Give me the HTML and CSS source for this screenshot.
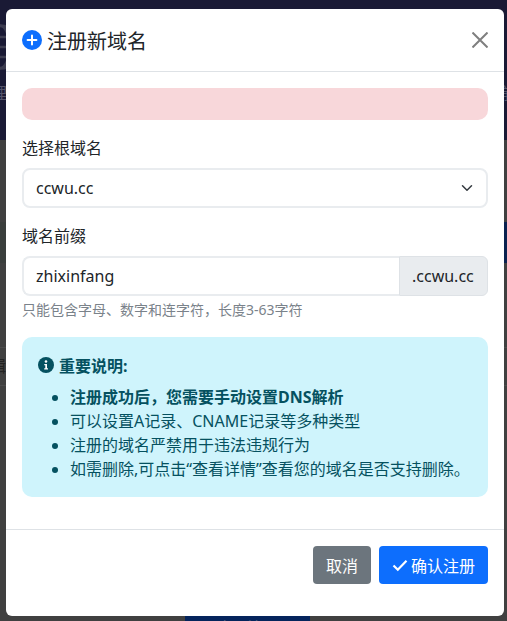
FILE: index.html
```html
<!DOCTYPE html>
<html lang="zh-CN">
    <head>
        <meta charset="utf-8">
        <meta name="viewport" content="width=device-width, initial-scale=1.0">
        <title>注册新域名</title>
        <link rel="stylesheet" href="styles.css">
    </head>
    <body>
        <!-- page behind the backdrop -->
        <div class="page">
            <div class="hero">
                <svg class="hero-globe" viewBox="0 0 80 80" width="80" height="80">
                    <circle cx="40" cy="40" r="34" fill="none" stroke="#3d3d50" stroke-width="5"/>
                    <ellipse cx="40" cy="40" rx="15" ry="34" fill="none" stroke="#3d3d50" stroke-width="4"/>
                    <path d="M6 40h68M11 24h58M11 56h58" stroke="#3d3d50" stroke-width="4"/>
                </svg>
                <div class="hero-row"><span>理</span><span>前</span></div>
            </div>
            <div class="strip">
                <div class="strip-left"></div>
                <div class="strip-right"></div>
            </div>
            <div class="rest-text">辑</div>
            <div class="rest-btn">立即注册</div>
        </div>

        <div class="backdrop">
            <div class="dialog">
                <div class="dialog-head">
                    <div class="dialog-title">
                        <svg class="plus-icon" viewBox="0 0 20 20" width="20" height="20">
                            <circle cx="10" cy="10" r="10" fill="#0d6efd"/>
                            <path d="M10 5.6v8.8M5.6 10h8.8" stroke="#fff" stroke-width="2" stroke-linecap="round"/>
                        </svg>
                        <span>注册新域名</span>
                    </div>
                    <svg class="close-icon" viewBox="0 0 16 16" width="16" height="16">
                        <path d="M.5.5l15 15M15.500.5l-15 15" stroke="#7f7f7f" stroke-width="2"/>
                    </svg>
                </div>

                <div class="dialog-body">
                    <div class="alert-empty"></div>

                    <div class="field">
                        <label class="field-label">选择根域名</label>
                        <div class="select-box">
                            <span>ccwu.cc</span>
                            <svg viewBox="0 0 16 16" width="16" height="16">
                                <path d="M2 5l6 6 6-6" fill="none" stroke="#343a40" stroke-width="2" stroke-linecap="round" stroke-linejoin="round"/>
                            </svg>
                        </div>
                    </div>

                    <div class="field">
                        <label class="field-label">域名前缀</label>
                        <div class="input-group">
                            <div class="input-box">zhixinfang</div>
                            <div class="input-addon">.ccwu.cc</div>
                        </div>
                        <div class="help">只能包含字母、数字和连字符，长度3-63字符</div>
                    </div>

                    <div class="info">
                        <div class="info-head">
                            <svg viewBox="0 0 16 16" width="16" height="16">
                                <circle cx="8" cy="8" r="8" fill="#055160"/>
                                <circle cx="8" cy="4.500" r="1.300" fill="#fff"/>
                                <path d="M6.300 7h2.700v4.300h1v1.200H6.200v-1.200h1.100V8.200h-1z" fill="#fff"/>
                            </svg>
                            <strong>重要说明:</strong>
                        </div>
                        <ul class="info-list">
                            <li><strong>注册成功后，您需要手动设置DNS解析</strong></li>
                            <li>可以设置A记录、CNAME记录等多种类型</li>
                            <li>注册的域名严禁用于违法违规行为</li>
                            <li>如需删除,可点击“查看详情”查看您的域名是否支持删除。</li>
                        </ul>
                    </div>
                </div>

                <div class="dialog-foot">
                    <button class="btn btn-gray">取消</button>
                    <button class="btn btn-blue">
                        <svg viewBox="0 0 16 16" width="16" height="16">
                            <path d="M1.500 8.500l4.300 4.300 8.700-9" fill="none" stroke="#fff" stroke-width="2.200"/>
                        </svg>
                        确认注册
                    </button>
                </div>
            </div>
        </div>
    </body>
</html>
```

FILE: styles.css
```css
* {
    box-sizing: border-box;
}
html, body {
    margin: 0;
    height: 100%;
    overflow: hidden;
}
body {
    font-family: "Noto Sans", "Noto Sans CJK SC", sans-serif;
    font-size: 16px;
    color: #212529;
    background-color: #404040;
}

/* page behind */
.page {
    height: 621px;
    overflow: hidden;
    display: flex;
    flex-direction: column;
}
.hero {
    height: 140px;
    padding-top: 22px;
    background-color: #1a1a35;
    overflow: hidden;
    color: #55556a;
}
.hero-globe {
    display: block;
    margin-left: -40px;
    height: 50px;
}
.hero-row {
    display: flex;
    justify-content: space-between;
    margin-top: 8px;
    margin-left: -9px;
    margin-right: -9px;
    font-size: 16px;
}
.strip {
    height: 41px;
    margin-top: 82px;
    display: flex;
    justify-content: space-between;
}
.strip-left {
    width: 6px;
    background-color: #3a3e3c;
}
.strip-right {
    width: 3px;
    background-color: #0a2250;
}
.rest-text {
    height: 39px;
    margin-top: 84px;
    margin-left: -10px;
    border-top: 1px solid #4c4c4c;
    border-bottom: 1px solid #4c4c4c;
    color: #222;
    font-size: 16px;
    line-height: 36px;
}
.rest-btn {
    margin-top: auto;
    margin-bottom: -16px;
    margin-left: 185px;
    width: 125px;
    height: 21px;
    background-color: #04245c;
    color: #55657f;
    text-align: center;
    font-size: 15px;
    line-height: 22px;
}

/* dialog */
.backdrop {
    position: absolute;
    top: 0;
    left: 0;
    width: 100%;
    height: 100%;
    padding: 9px 3px 0 6px;
}
.dialog {
    height: 607px;
    background-color: #fff;
    border-radius: 6px;
    display: flex;
    flex-direction: column;
}
.dialog-head {
    height: 63px;
    padding: 0 16px;
    border-bottom: 1px solid #dee2e6;
    display: flex;
    align-items: center;
    justify-content: space-between;
}
.dialog-title {
    display: flex;
    align-items: center;
    gap: 5px;
    font-size: 20px;
    color: #212529;
}
.plus-icon {
    display: block;
}
.close-icon {
    display: block;
}
.dialog-body {
    flex: 1;
    padding: 16px 16px 0;
}
.alert-empty {
    height: 32px;
    background-color: #f8d7da;
    border-radius: 10px;
}
.field {
    margin-top: 16px;
}
.field-label {
    display: block;
    height: 24px;
    line-height: 24px;
    margin-bottom: 8px;
    font-size: 16px;
}
.select-box {
    height: 40px;
    padding: 0 12px;
    border: 2px solid #e9ecef;
    border-radius: 8px;
    display: flex;
    align-items: center;
    justify-content: space-between;
    font-size: 16px;
}
.select-box svg {
    margin-right: -1px;
    transform: scale(.75);
}
.input-group {
    display: flex;
    height: 40px;
}
.input-box {
    flex: 1;
    padding: 0 12px;
    border: 2px solid #e9ecef;
    border-right: 0;
    border-radius: 8px 0 0 8px;
    line-height: 36px;
    font-size: 16px;
}
.input-addon {
    width: 89px;
    padding-left: 12px;
    background-color: #e9ecef;
    border: 1px solid #dee2e6;
    border-radius: 0 6px 6px 0;
    line-height: 38px;
    font-size: 16px;
    white-space: nowrap;
}
.help {
    margin-top: 3px;
    height: 22px;
    line-height: 21px;
    font-size: 14px;
    color: #7a828a;
}
.info {
    height: 160px;
    margin-top: 16px;
    padding: 16px;
    background-color: #cff4fc;
    border-radius: 10px;
    color: #055160;
}
.info-head {
    display: flex;
    align-items: center;
    gap: 5px;
    height: 24px;
    font-size: 16px;
}
.info-list {
    margin: 8px 0 0;
    padding-left: 32px;
    font-size: 16px;
    line-height: 24px;
}
.dialog-foot {
    height: 87px;
    padding: 16px;
    border-top: 1px solid #dee2e6;
    display: flex;
    justify-content: flex-end;
    gap: 8px;
}
.btn {
    height: 38px;
    padding: 0 13px;
    border: 0;
    border-radius: 4px;
    color: #fff;
    font-family: inherit;
    font-size: 16px;
    display: flex;
    align-items: center;
    gap: 3px;
}
.btn-gray {
    background-color: #6c757d;
}
.btn-blue {
    background-color: #0d6efd;
}
```
